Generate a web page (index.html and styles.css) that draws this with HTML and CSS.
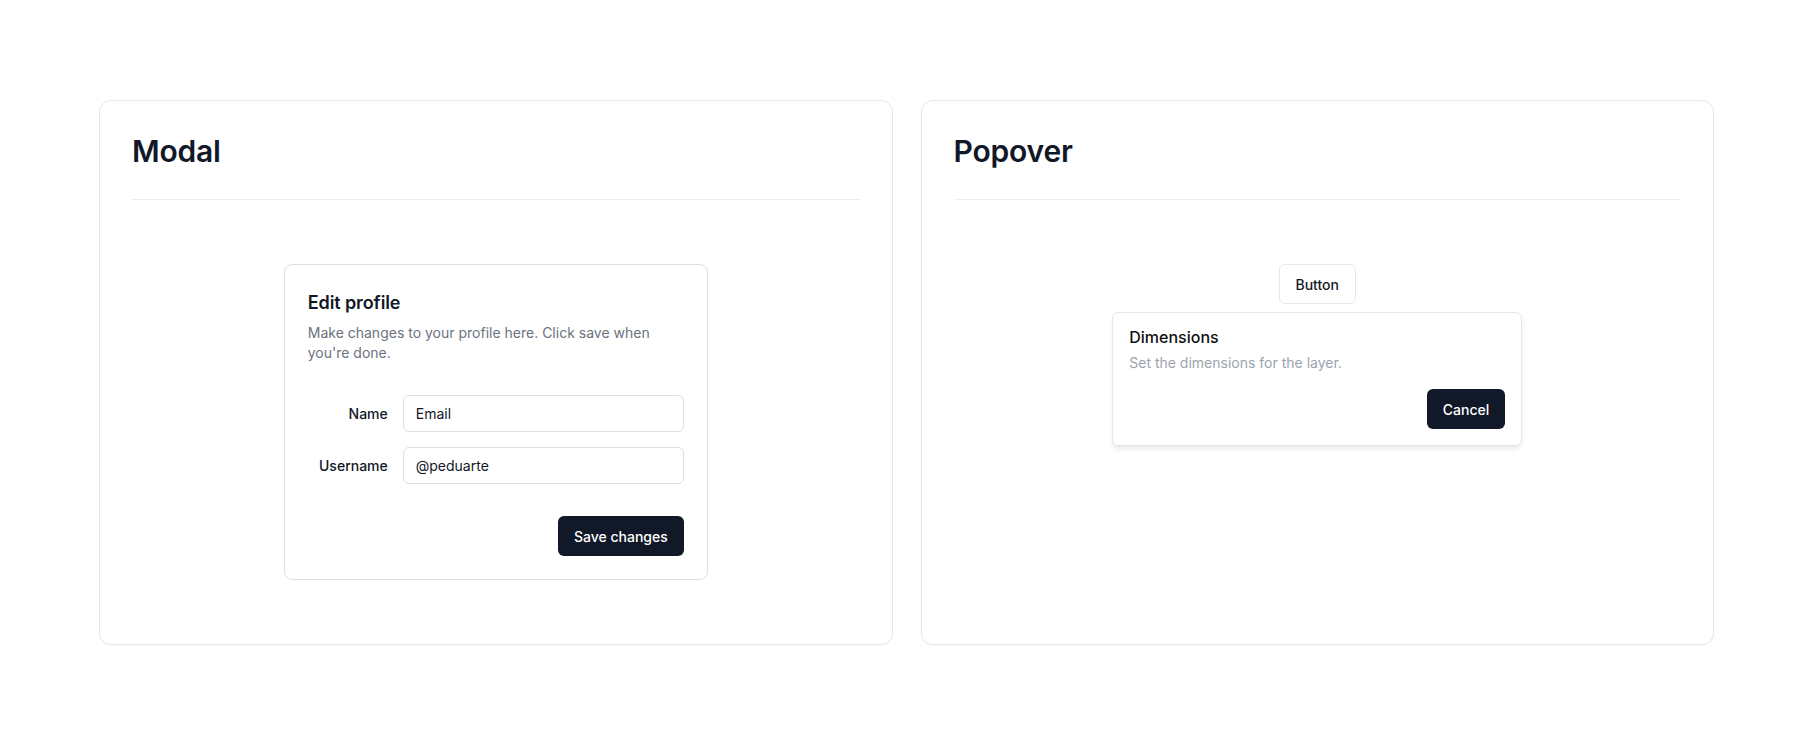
FILE: index.html
```html
<!DOCTYPE html>
<html lang="en">
<head>
<meta charset="utf-8">
<title>Modal & Popover</title>
<link rel="stylesheet" href="styles.css">
</head>
<body>
<main class="page">
  <section class="card">
    <header class="card-header"><h2 class="card-title">Modal</h2></header>
    <div class="card-body">
      <div class="dialog">
        <div class="dialog-header">
          <h3 class="dialog-title">Edit profile</h3>
          <p class="dialog-desc">Make changes to your profile here. Click save when you're done.</p>
        </div>
        <div class="form">
          <label class="label" for="name">Name</label>
          <input class="input" id="name" value="Email">
          <label class="label" for="username">Username</label>
          <input class="input" id="username" value="@peduarte">
        </div>
        <div class="dialog-footer">
          <button class="btn btn-dark">Save changes</button>
        </div>
      </div>
    </div>
  </section>
  <section class="card">
    <header class="card-header"><h2 class="card-title">Popover</h2></header>
    <div class="card-body card-body-col">
      <button class="btn btn-outline">Button</button>
      <div class="popover">
        <h4 class="popover-title">Dimensions</h4>
        <p class="popover-desc">Set the dimensions for the layer.</p>
        <div class="popover-footer">
          <button class="btn btn-dark">Cancel</button>
        </div>
      </div>
    </div>
  </section>
</main>
</body>
</html>
```
FILE: styles.css
```css
* { box-sizing: border-box; }
html, body { margin: 0; padding: 0; background: #fff; }
body {
  font-family: Inter, "Noto Sans", sans-serif;
  color: #111827;
  -webkit-font-smoothing: antialiased;
}
.page {
  padding: 100px 100px 100px 99px;
  display: grid;
  grid-template-columns: 1fr 1fr;
  gap: 28px;
  align-items: stretch;
}
.card {
  border: 1px solid #e5e7eb;
  border-radius: 12px;
  padding: 32px 32px 0;
  background: #fff;
  box-shadow: 0 1px 2px rgba(0,0,0,0.03);
}
.card-header {
  padding-bottom: 30px;
  border-bottom: 1px solid #eceef1;
}
.card-title {
  margin: 0;
  font-size: 30px;
  line-height: 36px;
  font-weight: 600;
  color: #111827;
  letter-spacing: -0.2px;
}
.card-body {
  padding: 64px 0;
  display: flex;
  justify-content: center;
}
.card-body-col {
  flex-direction: column;
  align-items: center;
  gap: 8px;
}
.dialog {
  width: 424px;
  border: 1px solid #dcdfe4;
  border-radius: 8px;
  padding: 24px 23px 23px 23px;
  background: #fff;
}
.dialog-header { display: flex; flex-direction: column; gap: 6px; }
.dialog-title {
  margin: 0;
  font-size: 18px;
  line-height: 28px;
  font-weight: 600;
  color: #111827;
  letter-spacing: -0.1px;
}
.dialog-desc {
  margin: 0;
  font-size: 14px;
  line-height: 20px;
  color: #6b7280;
}
.form {
  margin-top: 16px;
  padding: 16px 0;
  display: grid;
  grid-template-columns: 80px 1fr;
  column-gap: 15px;
  row-gap: 15px;
  align-items: center;
}
.label {
  text-align: right;
  font-size: 14px;
  font-weight: 500;
  color: #111827;
}
.input {
  height: 37px;
  width: 100%;
  border: 1px solid #dcdfe4;
  border-radius: 6px;
  padding: 0 12px;
  font-family: inherit;
  font-size: 14px;
  color: #111827;
  background: #fff;
  outline: none;
}
.dialog-footer {
  margin-top: 16px;
  display: flex;
  justify-content: flex-end;
}
.btn {
  font-family: inherit;
  font-size: 14px;
  font-weight: 500;
  height: 40px;
  border-radius: 6px;
  padding: 0 16px;
  cursor: pointer;
}
.btn-dark {
  background: #111827;
  color: #fff;
  border: none;
}
.btn-outline {
  background: #fff;
  color: #111827;
  border: 1px solid #e5e7eb;
}
.popover {
  width: 410px;
  border: 1px solid #e5e7eb;
  border-radius: 6px;
  padding: 16px;
  background: #fff;
  box-shadow: 0 4px 6px -1px rgba(0,0,0,0.08), 0 2px 4px -2px rgba(0,0,0,0.06);
}
.popover-title {
  margin: 0;
  font-size: 16px;
  line-height: 16px;
  font-weight: 500;
  color: #111;
}
.popover-desc {
  margin: 8px 0 0;
  font-size: 14px;
  line-height: 20px;
  color: #9ca3af;
}
.popover-footer {
  margin-top: 16px;
  display: flex;
  justify-content: flex-end;
}
```
